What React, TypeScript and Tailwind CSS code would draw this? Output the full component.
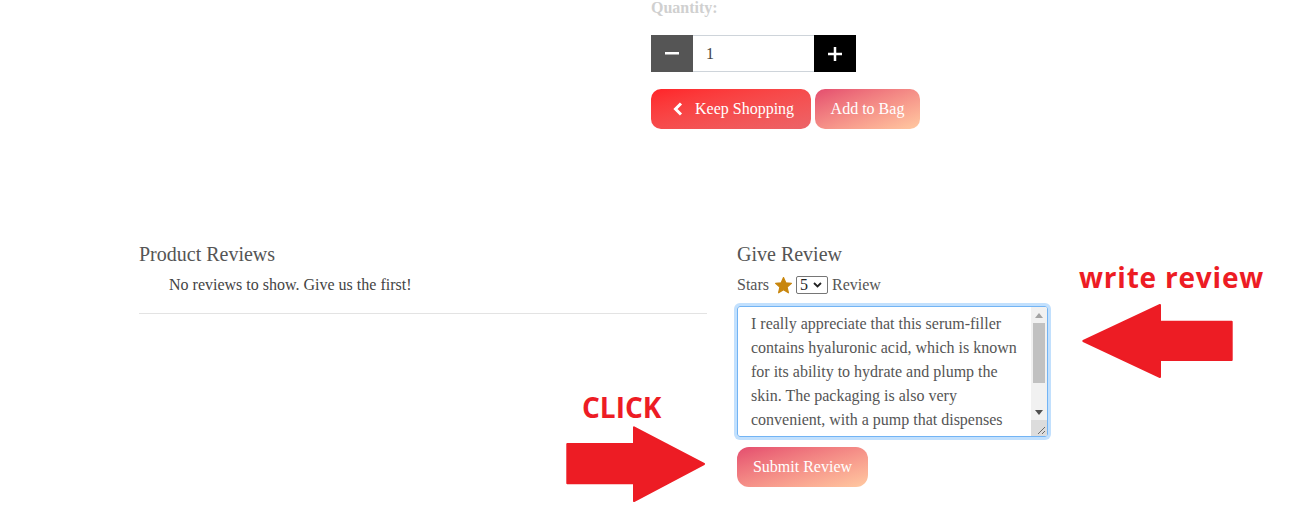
import React from 'react';

const reviewLines = [
  'I really appreciate that this serum-filler',
  'contains hyaluronic acid, which is known',
  'for its ability to hydrate and plump the',
  'skin. The packaging is also very',
  'convenient, with a pump that dispenses',
];

function Star() {
  return (
    <svg width="19" height="19" viewBox="0 0 24 24" className="shrink-0">
      <polygon
        points="12,2 14.9,8.6 22,9.3 16.6,14.1 18.2,21.2 12,17.5 5.8,21.2 7.4,14.1 2,9.3 9.1,8.6"
        fill="#c8860d"
        stroke="#c8860d"
        strokeWidth="1.5"
        strokeLinejoin="round"
      />
    </svg>
  );
}

function FakeScrollbar() {
  return (
    <div className="flex w-[16px] flex-col bg-[#f1f1f1]">
      <div className="flex h-[16px] items-center justify-center">
        <svg width="8" height="5" viewBox="0 0 8 5">
          <polygon points="4,0 8,5 0,5" fill="#a3a3a3" />
        </svg>
      </div>
      <div className="mx-[2px] h-[60px] bg-[#c1c1c1]" />
      <div className="flex-1" />
      <div className="flex h-[16px] items-center justify-center">
        <svg width="8" height="5" viewBox="0 0 8 5">
          <polygon points="0,0 8,0 4,5" fill="#505050" />
        </svg>
      </div>
      <div className="relative h-[16px] bg-[#dcdcdc]">
        <svg width="16" height="16" viewBox="0 0 16 16" className="absolute inset-0">
          <line x1="14" y1="7" x2="7" y2="14" stroke="#6b6b6b" strokeWidth="1" />
          <line x1="14" y1="11" x2="11" y2="14" stroke="#6b6b6b" strokeWidth="1" />
        </svg>
      </div>
    </div>
  );
}

export default function App() {
  return (
    <div
      className="relative h-[528px] w-[1301px] overflow-hidden bg-white"
      style={{ fontFamily: '"Liberation Serif", "Times New Roman", serif' }}
    >
      {/* product options */}
      <div className="ml-[651px]">
        <div className="text-[16px] font-bold leading-[16px] text-[#d0d0d0]">Quantity:</div>

        <div className="mt-[19px] flex h-[37px]">
          <button className="flex w-[42px] items-center justify-center bg-[#555555]">
            <svg width="14" height="3" viewBox="0 0 14 3">
              <rect width="14" height="2.5" fill="#fff" />
            </svg>
          </button>
          <div className="flex w-[121px] items-center border-y border-[#ced4da] pl-[13px] text-[16px] text-[#444]">
            1
          </div>
          <button className="flex w-[42px] items-center justify-center bg-black">
            <svg width="14" height="14" viewBox="0 0 14 14">
              <rect y="5.75" width="14" height="2.5" fill="#fff" />
              <rect x="5.75" width="2.5" height="14" fill="#fff" />
            </svg>
          </button>
        </div>

        <div className="mt-[17px] flex gap-[4px]">
          <button className="flex h-[40px] w-[160px] items-center gap-[12px] rounded-[10px] bg-linear-to-br from-[#ff2328] to-[#ec6468] pl-[22px] text-[16px] text-white">
            <svg width="10" height="14" viewBox="0 0 10 14">
              <polyline
                points="8,1.5 2.5,7 8,12.5"
                fill="none"
                stroke="#fff"
                strokeWidth="3"
                strokeLinejoin="miter"
              />
            </svg>
            Keep Shopping
          </button>
          <button className="flex h-[40px] w-[105px] items-center justify-center rounded-[10px] bg-linear-to-br from-[#e44c6e] to-[#ffc9a1] text-[16px] text-white">
            Add to Bag
          </button>
        </div>
      </div>

      {/* reviews */}
      <div className="ml-[139px] mt-[113px] flex">
        <div className="w-[568px]">
          <h3 className="text-[20px] leading-[24px] text-[#555]">Product Reviews</h3>
          <p className="mt-[7px] pl-[30px] text-[16px] leading-[24px] text-[#444]">
            No reviews to show. Give us the first!
          </p>
          <div className="mt-[16px] border-t border-[#e3e3e3]" />
        </div>

        <div className="ml-[30px] w-[320px]">
          <h3 className="text-[20px] leading-[24px] text-[#555]">Give Review</h3>
          <div className="mt-[7px] flex h-[24px] items-center text-[16px] text-[#555]">
            <span>Stars</span>
            <span className="ml-[5px]">
              <Star />
            </span>
            <span className="ml-[3px] flex h-[18px] w-[32px] items-center rounded-[2px] border border-[#767676] pl-[3px] text-[16px] leading-none text-[#222]">
              5
              <svg width="9" height="6" viewBox="0 0 9 6" className="ml-[5px]">
                <polyline points="1,1 4.5,4.5 8,1" fill="none" stroke="#222" strokeWidth="1.8" />
              </svg>
            </span>
            <span className="ml-[4px]">Review</span>
          </div>

          <div className="mt-[9px] flex h-[131px] w-[311px] overflow-hidden rounded-[3px] border border-[#73b4f4] ring-[3px] ring-[#c2e0fd]">
            <div className="flex-1 overflow-hidden pl-[13px] pt-[5px] text-[16px] leading-[24px] text-[#555]">
              {reviewLines.map((line) => (
                <div key={line} className="whitespace-nowrap">
                  {line}
                </div>
              ))}
            </div>
            <FakeScrollbar />
          </div>

          <button className="mt-[10px] flex h-[40px] w-[131px] items-center justify-center rounded-[12px] bg-linear-to-br from-[#e44c6e] to-[#ffc9a1] text-[16px] text-white">
            Submit Review
          </button>
        </div>
      </div>

      {/* annotations */}
      <div
        className="absolute left-[1079px] top-[263px] text-[28px] font-bold leading-[28px] tracking-[0.8px] text-[#ed1c24]"
        style={{ fontFamily: '"Open Sans", sans-serif' }}
      >
        write review
      </div>
      <svg className="absolute left-[1080px] top-[302px]" width="156" height="80" viewBox="0 0 156 80">
        <polygon
          points="3.3,39 80,3 80,19.7 151.7,19.7 151.7,58 80,58 80,75"
          fill="#ed1c24"
          stroke="#ed1c24"
          strokeWidth="2"
          strokeLinejoin="round"
        />
      </svg>

      <div
        className="absolute left-[582px] top-[393px] text-[28px] font-bold leading-[28px] text-[#ed1c24]"
        style={{ fontFamily: '"Open Sans", sans-serif' }}
      >
        CLICK
      </div>
      <svg className="absolute left-[564px] top-[424px]" width="144" height="80" viewBox="0 0 144 80">
        <polygon
          points="3.3,20 70,20 70,3.3 140,40 70,77 70,59.3 3.3,59.3"
          fill="#ed1c24"
          stroke="#ed1c24"
          strokeWidth="2"
          strokeLinejoin="round"
        />
      </svg>
    </div>
  );
}
